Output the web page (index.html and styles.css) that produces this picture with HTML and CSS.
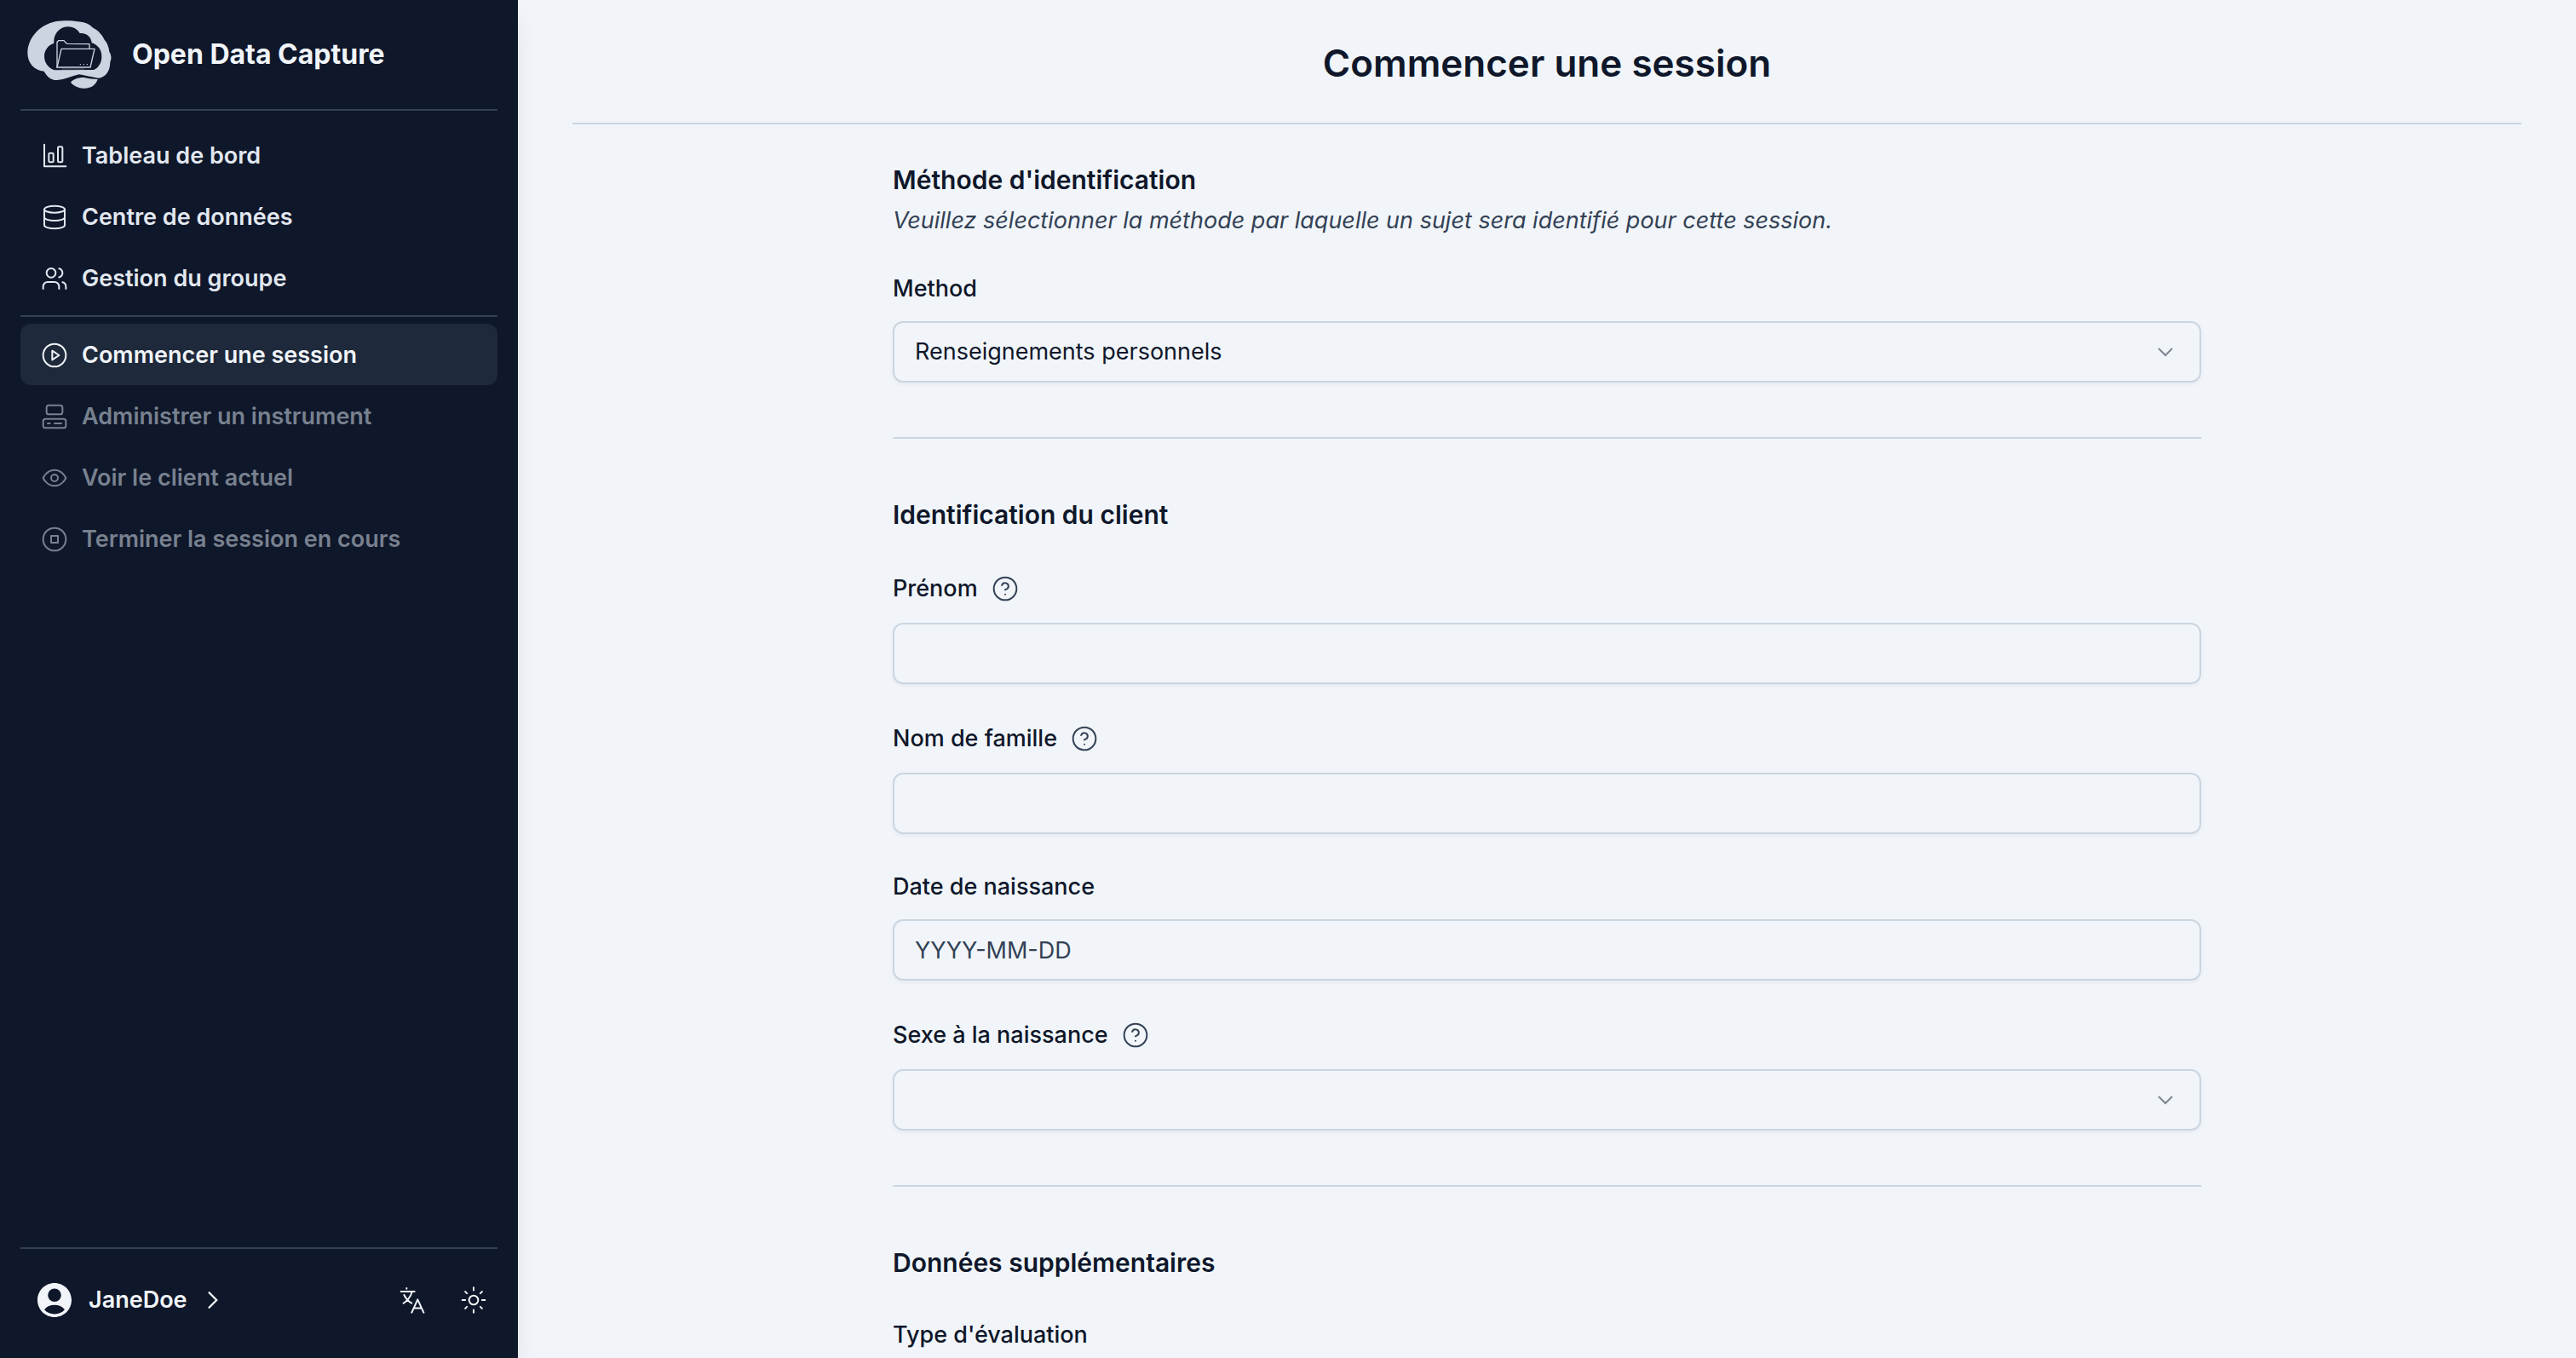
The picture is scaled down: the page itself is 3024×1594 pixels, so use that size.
FILE: index.html
```html
<!DOCTYPE html>
<html lang="fr">
<head>
<meta charset="utf-8">
<meta name="viewport" content="width=device-width, initial-scale=1">
<title>Open Data Capture</title>
<link rel="stylesheet" href="styles.css">
</head>
<body>
<div class="app">
  <aside class="sidebar">
    <div class="brand">
      <svg class="brand-logo" viewBox="36 42 297 240" aria-hidden="true">
        <path fill="#cbd5e1" d="M95 221 C60 217 37 192 37 155 C38 105 78 58 135 46 C165 41 195 42 215 46 C245 49 255 56 266 67 C290 80 300 95 308 110 C318 120 324 140 325 152 C333 165 333 178 328 188 C328 222 310 243 286 245 C262 241 240 236 219 232 C195 236 175 250 140 252 C118 252 106 240 95 221Z"/>
        <path fill="#cbd5e1" d="M189 260 C200 248 222 241 240 244 C255 247 268 249 284 249 C278 268 262 282 234 281 C212 279 200 272 189 260Z"/>
        <path fill="#0f172a" d="M132 217 C108 208 96 190 96 167 C97 145 110 129 130 122 C127 92 148 65 178 64 C198 64 213 73 221 87 C245 84 262 101 263 121 C286 128 298 147 298 168 C298 192 287 209 270 216Z"/>
        <g fill="none" stroke="#cbd5e1" stroke-width="4" stroke-linejoin="round" stroke-linecap="round">
          <path d="M141 208 V118 L146 113 H165 L172 121 L176 124 L255 125 V139"/>
          <path d="M156 142 H273 L258 207 H141Z"/>
          <path d="M158 213 H236" stroke-width="1"/>
          <path d="M223 197h.1M235 197h.1M247 197h.1"/>
        </g>
      </svg>
      <span class="brand-name">Open Data Capture</span>
    </div>
    <hr class="side-rule">
    <nav class="nav">
      <button class="nav-item" type="button">
        <svg class="icon" viewBox="0 0 24 24"><path d="M3 2V21.2H22"/><rect x="7" y="9.500" width="4" height="8" rx="1"/><rect x="15" y="4" width="4" height="13.500" rx="1"/></svg>
        Tableau de bord
      </button>
      <button class="nav-item" type="button">
        <svg class="icon" viewBox="0 0 24 24"><ellipse cx="12" cy="5" rx="9" ry="3"/><path d="M3 5V19A9 3 0 0 0 21 19V5"/><path d="M3 12A9 3 0 0 0 21 12"/></svg>
        Centre de données
      </button>
      <button class="nav-item" type="button">
        <svg class="icon" viewBox="0 0 24 24"><path d="M16 21v-2a4 4 0 0 0-4-4H6a4 4 0 0 0-4 4v2"/><circle cx="9" cy="7" r="4"/><path d="M22 21v-2a4 4 0 0 0-3-3.87"/><path d="M16 3.130a4 4 0 0 1 0 7.750"/></svg>
        Gestion du groupe
      </button>
      <hr class="side-rule nav-rule">
      <button class="nav-item active" type="button">
        <svg class="icon" viewBox="0 0 24 24"><circle cx="12" cy="12" r="10"/><path d="M10 8l6 4-6 4z"/></svg>
        Commencer une session
      </button>
      <button class="nav-item" type="button" disabled>
        <svg class="icon" viewBox="0 0 24 24"><rect x="5" y="2" width="14" height="8" rx="2"/><rect x="2" y="14" width="20" height="8" rx="2"/><path d="M6 18h2M12 18h6"/></svg>
        Administrer un instrument
      </button>
      <button class="nav-item" type="button" disabled>
        <svg class="icon" viewBox="0 0 24 24"><path d="M2 12s3-7 10-7 10 7 10 7-3 7-10 7-10-7-10-7Z"/><circle cx="12" cy="12" r="3"/></svg>
        Voir le client actuel
      </button>
      <button class="nav-item" type="button" disabled>
        <svg class="icon" viewBox="0 0 24 24"><circle cx="12" cy="12" r="10"/><rect x="9" y="9" width="6" height="6"/></svg>
        Terminer la session en cours
      </button>
    </nav>
    <hr class="side-rule">
    <div class="side-footer">
      <button class="user" type="button">
        <svg class="avatar" viewBox="0 0 24 24" aria-hidden="true"><path d="M12 2C6.480 2 2 6.480 2 12s4.480 10 10 10 10-4.480 10-10S17.520 2 12 2zm0 3.200a3.900 3.900 0 1 1 0 7.800 3.900 3.900 0 0 1 0-7.800zm0 15c-2.500 0-4.600-1-6-2.600 1.400-1.800 3.600-2.700 6-2.700s4.600.9 6 2.700c-1.400 1.600-3.500 2.600-6 2.600z"/></svg>
        JaneDoe
        <svg class="chevron" viewBox="0 0 24 24" aria-hidden="true"><path d="M8.200 4.500l7.500 7.500-7.500 7.500"/></svg>
      </button>
      <div class="tools">
        <button class="tool" type="button" aria-label="Langue">
          <svg class="icon" viewBox="0 0 24 24"><path d="M7 1.500v.6M2 4.500h12M11.800 4.500c-1 4-4 8-7.600 10.300M4.800 7.500c1.400 3 3.700 5.600 6.600 7.200M11.500 23L16.700 11.500 22 23M13.300 19.200h6.800"/></svg>
        </button>
        <button class="tool" type="button" aria-label="Thème">
          <svg class="icon" viewBox="0 0 24 24"><circle cx="12" cy="12" r="4"/><path d="M12 1v2.400M12 20.600V23M4.600 4.600l1.500 1.500M17.900 17.900l1.500 1.500M2 12h2.600M19.400 12H22M6.100 17.900l-1.500 1.500M19.400 4.600l-1.500 1.500"/></svg>
        </button>
      </div>
    </div>
  </aside>
  <main class="main">
    <header class="page-header">
      <h1 class="page-title">Commencer une session</h1>
    </header>
    <form class="form">
      <section class="section">
        <div class="section-head">
          <h2 class="section-title">Méthode d'identification</h2>
          <p class="section-text">Veuillez sélectionner la méthode par laquelle un sujet sera identifié pour cette session.</p>
        </div>
        <div class="field">
          <label class="label" for="method">Method</label>
          <div class="select">
            <select class="control" id="method"><option>Renseignements personnels</option></select>
            <svg class="caret" viewBox="0 0 30 30" aria-hidden="true"><path d="M7 11l8 8 8-8"/></svg>
          </div>
        </div>
      </section>
      <section class="section">
        <h2 class="section-title">Identification du client</h2>
        <div class="field">
          <div class="label-row">
            <label class="label" for="first">Prénom</label>
            <button class="help" type="button" aria-label="Aide"><svg class="icon" viewBox="0 0 24 24"><circle cx="12" cy="12" r="10"/><path d="M9.090 9a3 3 0 0 1 5.830 1c0 2-3 3-3 3M12 17h.01"/></svg></button>
          </div>
          <input class="control" id="first" type="text">
        </div>
        <div class="field">
          <div class="label-row">
            <label class="label" for="last">Nom de famille</label>
            <button class="help" type="button" aria-label="Aide"><svg class="icon" viewBox="0 0 24 24"><circle cx="12" cy="12" r="10"/><path d="M9.090 9a3 3 0 0 1 5.830 1c0 2-3 3-3 3M12 17h.01"/></svg></button>
          </div>
          <input class="control" id="last" type="text">
        </div>
        <div class="field">
          <label class="label" for="birth">Date de naissance</label>
          <input class="control" id="birth" type="text" placeholder="YYYY-MM-DD">
        </div>
        <div class="field">
          <div class="label-row">
            <label class="label" for="sex">Sexe à la naissance</label>
            <button class="help" type="button" aria-label="Aide"><svg class="icon" viewBox="0 0 24 24"><circle cx="12" cy="12" r="10"/><path d="M9.090 9a3 3 0 0 1 5.830 1c0 2-3 3-3 3M12 17h.01"/></svg></button>
          </div>
          <div class="select">
            <select class="control" id="sex"><option></option></select>
            <svg class="caret" viewBox="0 0 30 30" aria-hidden="true"><path d="M7 11l8 8 8-8"/></svg>
          </div>
        </div>
      </section>
      <section class="section">
        <h2 class="section-title">Données supplémentaires</h2>
        <div class="field">
          <label class="label" for="kind">Type d'évaluation</label>
          <div class="select">
            <select class="control" id="kind"><option></option></select>
            <svg class="caret" viewBox="0 0 30 30" aria-hidden="true"><path d="M7 11l8 8 8-8"/></svg>
          </div>
        </div>
      </section>
    </form>
  </main>
</div>
</body>
</html>
```
FILE: styles.css
```css
:root {
  --navy: #0f172a;
  --navy-light: #1e293b;
  --slate: #334155;
  --line: #cbd5e1;
  --pale: #f1f5f9;
}

* {
  box-sizing: border-box;
}

body {
  margin: 0;
  background: var(--pale);
  color: var(--navy);
  font-family: Inter, "Liberation Sans", sans-serif;
  font-size: 27px;
  line-height: 36px;
}

button,
input,
select {
  font: inherit;
  color: inherit;
}

button {
  padding: 0;
  border: 0;
  background: none;
  cursor: pointer;
}

.app {
  display: flex;
  height: 100vh;
}

.icon {
  display: block;
  flex: none;
  width: 32px;
  height: 32px;
  fill: none;
  stroke: currentColor;
  stroke-width: 1.5;
  stroke-linecap: round;
  stroke-linejoin: round;
}

/* Sidebar */
.sidebar {
  position: relative;
  z-index: 1;
  display: flex;
  flex: none;
  flex-direction: column;
  width: 608px;
  padding: 24px 24px 32px;
  background: var(--navy);
  color: var(--pale);
  box-shadow: 0 20px 30px -6px rgb(0 0 0 / 10%), 0 8px 12px -8px rgb(0 0 0 / 10%);
}

.brand {
  display: flex;
  align-items: center;
  gap: 24px;
  padding: 0 8px 24px;
}

.brand-logo {
  flex: none;
  width: 99px;
  height: 80px;
}

.brand-name {
  font-size: 32px;
  font-weight: 700;
}

.side-rule {
  width: 100%;
  height: 2px;
  margin: 0;
  border: 0;
  background: var(--slate);
}

.nav {
  display: flex;
  flex: 1;
  flex-direction: column;
  padding-top: 16px;
}

.nav-rule {
  margin: 8px 0;
}

.nav-item {
  display: flex;
  align-items: center;
  gap: 16px;
  height: 72px;
  padding: 2px 24px 0;
  border-radius: 12px;
  color: #e2e8f0;
  font-weight: 600;
  text-align: left;
}

.nav-item.active {
  background: var(--navy-light);
  color: var(--pale);
}

.nav-item:disabled {
  color: #78818f;
  cursor: default;
}

.side-footer {
  display: flex;
  align-items: center;
  justify-content: space-between;
  padding: 24px 12px 0 16px;
}

.user {
  display: flex;
  align-items: center;
  gap: 16px;
  height: 72px;
  font-weight: 600;
}

.avatar {
  width: 48px;
  height: 48px;
  fill: currentColor;
}

.chevron {
  width: 28px;
  height: 28px;
  fill: none;
  stroke: currentColor;
  stroke-width: 2;
  stroke-linecap: round;
  stroke-linejoin: round;
}

.tools {
  display: flex;
  gap: 40px;
}

/* Page */
.main {
  flex: 1;
  padding: 0 64px 64px;
  overflow: auto;
  scrollbar-width: none;
}

.page-header {
  padding: 46px 0 42px;
  border-bottom: 2px solid var(--line);
}

.page-title {
  margin: 0;
  font-size: 44px;
  font-weight: 600;
  line-height: 56px;
  text-align: center;
}

.form {
  max-width: 1536px;
  margin: 0 auto;
  padding-top: 49px;
}

.section {
  display: flex;
  flex-direction: column;
  gap: 48px;
}

.section + .section {
  margin-top: 64px;
  padding-top: 73px;
  border-top: 2px solid var(--line);
}

.section-title {
  margin: 0;
  font-size: 30px;
  font-weight: 600;
  line-height: 32px;
}

.section > .section-title {
  margin-bottom: 7px;
}

.section-head {
  display: grid;
  gap: 14px;
}

.section-text {
  margin: 0;
  color: var(--slate);
  font-style: italic;
}

.field {
  display: flex;
  flex-direction: column;
  gap: 24px;
}

.label-row {
  display: flex;
  align-items: center;
  gap: 16px;
}

.label {
  font-weight: 500;
  line-height: 28px;
}

.help {
  color: var(--slate);
}

.control {
  display: block;
  width: 100%;
  height: 72px;
  padding: 0 24px;
  border: 2px solid var(--line);
  border-radius: 12px;
  background: transparent;
  box-shadow: 0 2px 4px rgb(0 0 0 / 5%);
  appearance: none;
}

.control::placeholder {
  color: var(--slate);
  opacity: 1;
}

.select {
  position: relative;
}

.caret {
  position: absolute;
  top: 21px;
  right: 27px;
  width: 30px;
  height: 30px;
  fill: none;
  stroke: currentColor;
  stroke-width: 2;
  opacity: 0.5;
  pointer-events: none;
}
```
